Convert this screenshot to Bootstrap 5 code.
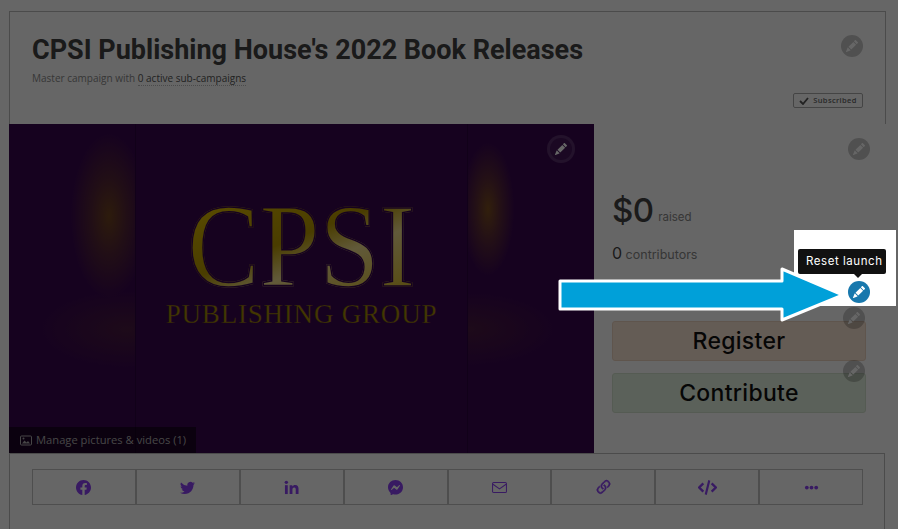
<!DOCTYPE html>
<html lang="en">
<head>
  <meta charset="UTF-8">
  <meta name="viewport" content="width=device-width, initial-scale=1.0">
  <title>CPSI Publishing House's 2022 Book Releases</title>
  <link href="https://cdn.jsdelivr.net/npm/bootstrap@5.3.0/dist/css/bootstrap.min.css" rel="stylesheet">
  <style>
    html, body { height: 100%; overflow: hidden; }
    body { background: #fff; font-family: "Inter", "Open Sans", sans-serif; color: #333; }
    .page-wrap { padding: 11px 12px 0 9px; position: relative; }
    .head-box { position: relative; height: 113px; border: 1px solid #bbb; border-bottom: 0; padding: 22px 22px 0 22px; }
    .camp-title { font-family: "Roboto", sans-serif; font-weight: 700; font-size: 27px; line-height: 32px; color: #414141; margin: 0; }
    .camp-sub { font-family: "Open Sans", sans-serif; font-size: 10px; line-height: 14px; color: #8a8a8a; margin-top: 5px; }
    .camp-sub span { color: #555; border-bottom: 1px dotted #bbb; }
    .sub-tag { position: absolute; right: 22px; bottom: 16px; width: 70px; height: 15px; border: 1px solid #aaa; border-radius: 2px;
      font-family: "Open Sans", sans-serif; font-size: 7.5px; font-weight: 600; letter-spacing: .35px; color: #666; }
    .sub-tag svg { width: 10px; height: 8px; }
    .main-row { display: flex; height: 329px; }
    .media-box { position: relative; width: 585px; flex: none; display: flex; background: #39074f; overflow: hidden; }
    .side-l { width: 127px; flex: none; border-right: 1px solid #2c0340;
      background: radial-gradient(ellipse 38px 82px at 100px 92px, #70451f 0%, rgba(112,69,31,.5) 45%, rgba(112,69,31,0) 100%),
                  radial-gradient(ellipse 85px 38px at 118px 205px, #4a1a40 0%, rgba(74,26,64,0) 100%); }
    .side-r { flex: 1; border-left: 1px solid #2c0340;
      background: radial-gradient(ellipse 26px 66px at 20px 85px, #7c4f1f 0%, rgba(124,79,31,.5) 45%, rgba(124,79,31,0) 100%),
                  radial-gradient(ellipse 85px 36px at 0 205px, #4a1a40 0%, rgba(74,26,64,0) 100%); }
    .logo-mid { width: 331px; flex: none; text-align: center; font-family: "Liberation Serif", serif; padding-top: 81px; }
    .logo-big { height: 90px; font-size: 108px; line-height: 90px; font-weight: 400; transform: scaleY(1.09); transform-origin: 50% 81px;
      background: linear-gradient(160deg, #f0cc00 0%, #b89800 45%, #f3e090 60%, #d0ae00 100%);
      -webkit-background-clip: text; background-clip: text; color: transparent; -webkit-text-stroke: 1.4px #39074f; }
    .logo-small { font-size: 27px; line-height: 30px; letter-spacing: .8px; color: #a78b00; white-space: nowrap; margin-top: 4px; -webkit-text-stroke: .3px #39074f; }
    .media-tag { position: absolute; left: 0; bottom: 0; width: 187px; height: 26px; background: rgba(0,0,0,.5);
      font-family: "Open Sans", sans-serif; font-size: 11.2px; color: #b0b0b0; padding-left: 11px; gap: 4px; }
    .media-tag svg { width: 12px; height: 11px; }
    .info-col { position: relative; flex: 1; padding: 66px 20px 0 18px; }
    .raised-line { line-height: 40px; color: #444; }
    .raised-line b { font-size: 33px; font-weight: 500; letter-spacing: -.5px; }
    .raised-line span { font-size: 11.5px; color: #888; position: relative; top: -1px; }
    .contrib-line { margin-top: 3px; line-height: 24px; font-size: 12.5px; color: #888; }
    .contrib-line b { font-size: 16px; font-weight: 400; color: #444; }
    .act-btn { display: block; width: 100%; height: 40px; padding: 0; margin-bottom: 12px; font-size: 23px; font-weight: 500; letter-spacing: .3px; line-height: 38px; color: #111; border-radius: 3px; }
    .act-reg { background: #fbe6d5; border: 1px solid #eed5c0; margin-top: 54px; }
    .act-con { background: #e4f2e0; border: 1px solid #d4e4d0; }
    .act-btn:hover { color: #111; }
    .share-box { height: 76px; margin-right: 1px; border: 1px solid #bbb; border-bottom: 0; padding: 15px 21px 0 22px; }
    .share-bar { display: flex; height: 36px; border: 1px solid #c4c4c4; }
    .share-cell { flex: 1; display: flex; align-items: center; justify-content: center; border-right: 2px solid #c4c4c4; color: #8d42f5; }
    .share-cell:last-child { border-right: 0; }
    .share-cell svg { width: 15px; height: 15px; fill: currentColor; }
    .share-cell svg.ic-big { width: 19px; height: 19px; }
    .edit-dot { position: absolute; width: 22px; height: 22px; border-radius: 50%; background: rgba(0,0,0,.22); display: flex; align-items: center; justify-content: center; color: #fff; }
    .edit-dot svg, .spot-dot svg { width: 12px; height: 12px; fill: currentColor; }
    .dot-head { top: 23px; right: 22px; }
    .dot-media { top: 14px; right: 22px; background: rgba(255,255,255,.06); box-shadow: 0 0 0 3px rgba(255,255,255,.16); }
    .dot-info { top: 14px; right: 16px; }
    .dot-reg { top: 183px; right: 21px; }
    .dot-con { top: 236px; right: 21px; }
    .dim-layer { position: fixed; inset: 0; background: rgba(0,0,0,.6); z-index: 10; }
    .spot-box { position: absolute; left: 794px; top: 230px; width: 102px; height: 76px; background: #fff; z-index: 11; }
    .spot-tip { position: absolute; left: 4px; top: 19px; width: 88px; height: 25px; background: #111; border-radius: 2px; color: #fff; font-size: 11.5px; letter-spacing: .55px; line-height: 25px; padding-left: 8px; white-space: nowrap; overflow: hidden; }
    .spot-caret { position: absolute; left: 60px; top: 44px; border: 4px solid transparent; border-top-color: #111; border-bottom: 0; }
    .spot-dot { position: absolute; left: 54px; top: 51px; width: 22px; height: 22px; border-radius: 50%; background: #1878ad; color: #fff; display: flex; align-items: center; justify-content: center; }
    .spot-arrow { position: absolute; left: 556px; top: 264px; z-index: 12; }
  </style>
</head>
<body>
  <svg width="0" height="0" class="position-absolute">
    <symbol id="ic-pencil" viewBox="0 0 16 16"><path d="M12.854.146a.5.5 0 0 0-.707 0L10.5 1.793 14.207 5.5l1.647-1.646a.5.5 0 0 0 0-.708l-3-3zm.646 6.061L9.793 2.5 3.293 9H3.5a.5.5 0 0 1 .5.5v.5h.5a.5.5 0 0 1 .5.5v.5h.5a.5.5 0 0 1 .5.5v.5h.5a.5.5 0 0 1 .5.5v.207l6.5-6.5zm-7.468 7.468A.5.5 0 0 1 6 13.5V13h-.5a.5.5 0 0 1-.5-.5V12h-.5a.5.5 0 0 1-.5-.5V11h-.5a.5.5 0 0 1-.5-.5V10h-.5a.499.499 0 0 1-.175-.032l-.179.178a.5.5 0 0 0-.11.168l-2 5a.5.5 0 0 0 .65.65l5-2a.5.5 0 0 0 .168-.11l.178-.178z"/></symbol>
  </svg>

  <div class="page-wrap">
    <div class="head-box">
      <h1 class="camp-title">CPSI Publishing House's 2022 Book Releases</h1>
      <div class="camp-sub">Master campaign with <span>0 active sub-campaigns</span></div>
      <div class="sub-tag d-flex align-items-center justify-content-center gap-1">
        <svg viewBox="0 0 10 8"><path d="M1 4l3 3 5-6" fill="none" stroke="#555" stroke-width="1.8"/></svg>Subscribed
      </div>
      <div class="edit-dot dot-head"><svg><use href="#ic-pencil"/></svg></div>
    </div>

    <div class="main-row">
      <div class="media-box">
        <div class="side-l"></div>
        <div class="logo-mid">
          <div class="logo-big">CPSI</div>
          <div class="logo-small">PUBLISHING GROUP</div>
        </div>
        <div class="side-r"></div>
        <div class="media-tag d-flex align-items-center">
          <svg viewBox="0 0 12 11"><rect x=".5" y="1" width="11" height="9" rx="1" fill="none" stroke="#b0b0b0"/><path d="M2 8.5l2.5-3 2 2 1.5-1.5 2 2.5z" fill="#b0b0b0"/><circle cx="3.5" cy="3.5" r="1" fill="#b0b0b0"/></svg>
          Manage pictures &amp; videos (1)
        </div>
        <div class="edit-dot dot-media"><svg><use href="#ic-pencil"/></svg></div>
      </div>

      <div class="info-col">
        <div class="edit-dot dot-info"><svg><use href="#ic-pencil"/></svg></div>
        <div class="raised-line"><b>$0</b> <span>raised</span></div>
        <div class="contrib-line"><b>0</b> contributors</div>
        <a class="btn act-btn act-reg" href="#">Register</a>
        <a class="btn act-btn act-con" href="#">Contribute</a>
        <div class="edit-dot dot-reg"><svg><use href="#ic-pencil"/></svg></div>
        <div class="edit-dot dot-con"><svg><use href="#ic-pencil"/></svg></div>
      </div>
    </div>

    <div class="share-box">
      <div class="share-bar">
        <div class="share-cell"><svg viewBox="0 0 16 16"><path d="M16 8.049c0-4.446-3.582-8.05-8-8.05C3.58 0-.002 3.603-.002 8.05c0 4.017 2.926 7.347 6.75 7.951v-5.625h-2.03V8.05H6.75V6.275c0-2.017 1.195-3.131 3.022-3.131.876 0 1.791.157 1.791.157v1.98h-1.009c-.993 0-1.303.621-1.303 1.258v1.51h2.218l-.354 2.326H9.25V16c3.824-.604 6.75-3.934 6.75-7.951z"/></svg></div>
        <div class="share-cell"><svg viewBox="0 0 16 16"><path d="M5.026 15c6.038 0 9.341-5.003 9.341-9.334 0-.14 0-.282-.006-.422A6.685 6.685 0 0 0 16 3.542a6.658 6.658 0 0 1-1.889.518 3.301 3.301 0 0 0 1.447-1.817 6.533 6.533 0 0 1-2.087.793A3.286 3.286 0 0 0 7.875 6.03a9.325 9.325 0 0 1-6.767-3.429 3.289 3.289 0 0 0 1.018 4.382A3.323 3.323 0 0 1 .64 6.575v.045a3.288 3.288 0 0 0 2.632 3.218 3.203 3.203 0 0 1-.865.115 3.23 3.23 0 0 1-.614-.057 3.283 3.283 0 0 0 3.067 2.277A6.588 6.588 0 0 1 .78 13.58a6.32 6.32 0 0 1-.78-.045A9.344 9.344 0 0 0 5.026 15z"/></svg></div>
        <div class="share-cell"><svg viewBox="0 0 16 16"><path d="M1 5.5h3V15H1z"/><circle cx="2.5" cy="2.5" r="1.8"/><path d="M6 5.5h2.9v1.3c.5-.9 1.6-1.6 3-1.6 2.9 0 3.6 1.9 3.6 4.4V15h-3v-4.8c0-1.2-.2-2.3-1.6-2.3-1.5 0-1.9 1.1-1.9 2.3V15H6z"/></svg></div>
        <div class="share-cell"><svg viewBox="0 0 16 16"><path d="M0 7.76C0 3.301 3.493 0 8 0s8 3.301 8 7.76-3.493 7.76-8 7.76c-.81 0-1.586-.107-2.316-.307a.639.639 0 0 0-.427.03l-1.588.702a.64.64 0 0 1-.898-.566l-.044-1.423a.639.639 0 0 0-.215-.456C.956 12.108 0 10.092 0 7.76zm5.546-1.459-2.35 3.728c-.225.358.214.761.551.506l2.525-1.916a.48.48 0 0 1 .578-.002l1.869 1.402a1.2 1.2 0 0 0 1.735-.32l2.35-3.728c.226-.358-.214-.761-.551-.506L9.728 7.381a.48.48 0 0 1-.578.002L7.281 5.98a1.2 1.2 0 0 0-1.735.32z"/></svg></div>
        <div class="share-cell"><svg viewBox="0 0 16 16"><rect x=".6" y="2.6" width="14.8" height="10.8" rx="1.2" fill="none" stroke="currentColor" stroke-width="1.1"/><path d="M1 4.5l7 5 7-5" fill="none" stroke="currentColor" stroke-width="1.1"/></svg></div>
        <div class="share-cell"><svg class="ic-big" viewBox="0 0 16 16"><path d="M4.715 6.542 3.343 7.914a3 3 0 1 0 4.243 4.243l1.828-1.829A3 3 0 0 0 8.586 5.5L8 6.086a1.002 1.002 0 0 0-.154.199 2 2 0 0 1 .861 3.337L6.88 11.45a2 2 0 1 1-2.83-2.83l.793-.792a4.018 4.018 0 0 1-.128-1.287z" stroke="currentColor" stroke-width=".5"/><path d="M6.586 4.672A3 3 0 0 0 7.414 9.5l.775-.776a2 2 0 0 1-.896-3.346L9.12 3.55a2 2 0 1 1 2.83 2.83l-.793.792c.112.42.155.855.128 1.287l1.372-1.372a3 3 0 1 0-4.243-4.243L6.586 4.672z" stroke="currentColor" stroke-width=".5"/></svg></div>
        <div class="share-cell"><svg class="ic-big" viewBox="0 0 16 16"><path d="M4.5 4.5L1 8l3.5 3.5M11.5 4.5L15 8l-3.5 3.5" fill="none" stroke="currentColor" stroke-width="2"/><path d="M9.5 2L6.5 14" fill="none" stroke="currentColor" stroke-width="1.8"/></svg></div>
        <div class="share-cell"><svg viewBox="0 0 16 16"><circle cx="3" cy="8" r="2"/><circle cx="8" cy="8" r="2"/><circle cx="13" cy="8" r="2"/></svg></div>
      </div>
    </div>
  </div>

  <div class="dim-layer"></div>

  <div class="spot-box">
    <div class="spot-tip">Reset launch</div>
    <div class="spot-caret"></div>
    <div class="spot-dot"><svg><use href="#ic-pencil"/></svg></div>
  </div>
  <svg class="spot-arrow" width="292" height="60" viewBox="0 0 292 60">
    <path d="M4 17H226V5L287 31L226 56V45H4z" fill="#00a0d9" stroke="#fff" stroke-width="3" stroke-linejoin="round"/>
  </svg>
</body>
</html>
